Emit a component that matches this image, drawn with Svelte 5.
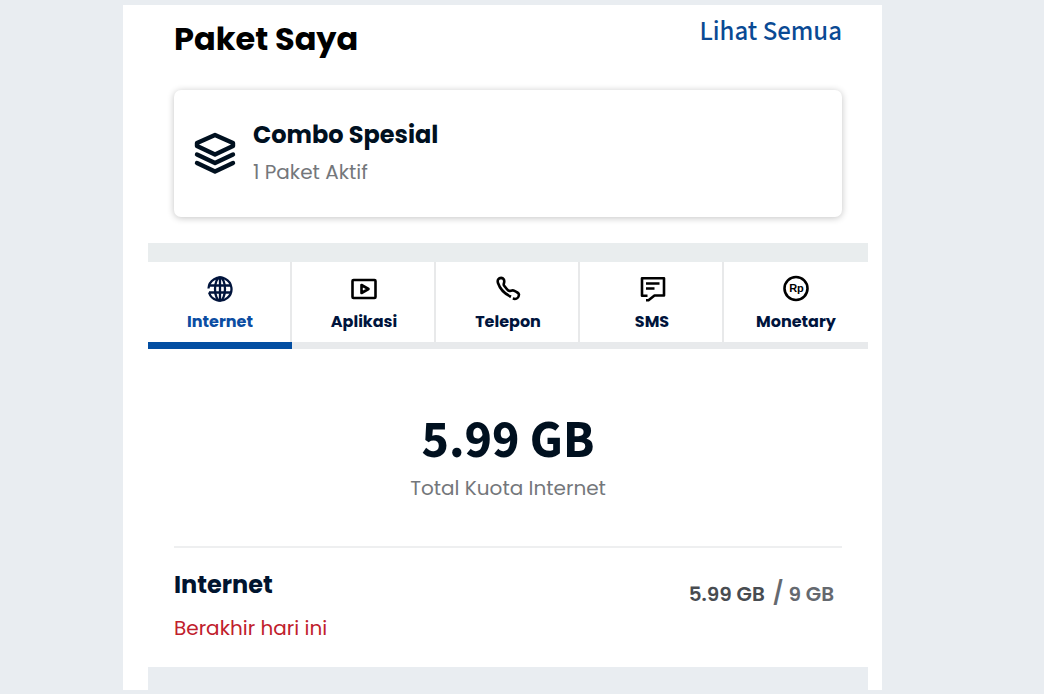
<script lang="ts">
  type Tab = {
    id: string
    label: string
  }

  const tabs: Tab[] = [
    { id: 'internet', label: 'Internet' },
    { id: 'aplikasi', label: 'Aplikasi' },
    { id: 'telepon', label: 'Telepon' },
    { id: 'sms', label: 'SMS' },
    { id: 'monetary', label: 'Monetary' },
  ]

  let active = $state('internet')
</script>

<main class="panel">
  <header class="header">
    <h1>Paket Saya</h1>
    <a href="#semua">Lihat Semua</a>
  </header>

  <section class="card">
    <svg class="layers" viewBox="0 0 42 42" aria-hidden="true">
      <path d="M21 3 39 11v3L21 22.500 3 14v-3z" />
      <path d="M3 22.500 21 31l18-8.500" />
      <path d="M3 31 21 39.500l18-8.500" />
    </svg>
    <div>
      <h2>Combo Spesial</h2>
      <p>1 Paket Aktif</p>
    </div>
  </section>

  <div class="package">
    <nav class="tabs">
      {#each tabs as tab}
        <button
          type="button"
          class="tab"
          class:active={active === tab.id}
          aria-pressed={active === tab.id}
          onclick={() => (active = tab.id)}
        >
          <svg class="icon" viewBox="0 0 28 28" aria-hidden="true">
            {#if tab.id === 'internet'}
              <g class="globe">
                <path d="M2.500 13.500A11.500 11.500 0 1 1 3 17.500" />
                <ellipse cx="14" cy="14" rx="5" ry="11.500" />
                <path d="M14 2.500v23M3 10.500h22M3 17.500h22" />
              </g>
            {:else if tab.id === 'aplikasi'}
              <rect x="2.500" y="5" width="23" height="18" rx="1" />
              <path d="M11.500 10v8l7-4z" />
            {:else if tab.id === 'telepon'}
              <path d="M17 21.800C10 18.500 5.500 12.500 4 8C3 5 4.800 3 7.200 2.900C9.500 2.900 10.500 5 10.200 7C10 8.500 9.200 9.500 10 10.500C11.500 12.500 13 14.500 14.500 15.700C16 16.500 17.500 15 19.500 15.500C22 16.500 24.500 17.500 25 19.500C24.800 22 23 24 21 24L18.800 23.500" />
            {:else if tab.id === 'sms'}
              <path d="M9.500 20.800H4V3.200h22V20.500H16.500l-6 4.700H8" />
              <path d="M8 8.500h13.500M8 13.500h8.500" />
            {:else}
              <circle cx="14" cy="13.500" r="11.500" />
              <text x="14.500" y="16.500" text-anchor="middle">Rp</text>
            {/if}
          </svg>
          <span>{tab.label}</span>
        </button>
      {/each}
    </nav>

    <section class="total">
      <strong>5.99 GB</strong>
      <p>Total Kuota Internet</p>
    </section>

    <section class="quota">
      <div>
        <h3>Internet</h3>
        <p>Berakhir hari ini</p>
      </div>
      <div class="usage">
        <span class="left">5.99 GB</span>
        <span class="limit"><span class="slash">/</span> 9 GB</span>
      </div>
    </section>
  </div>
</main>

<style>
  :global(body) {
    background: #e9edf1;
  }

  .panel {
    margin: 5px 162px 4px 123px;
    background: #fff;
    font-family: Poppins, Inter, sans-serif;
    color: #00142f;
    overflow: hidden;
  }

  h1,
  h2,
  h3,
  p {
    margin: 0;
    font-weight: 400;
  }

  .header {
    display: flex;
    justify-content: space-between;
    align-items: flex-start;
    margin: 10px 40px 0 51px;
  }

  h1 {
    font-size: 32px;
    line-height: 48px;
    font-weight: 700;
    color: #000;
  }

  .header a {
    font-family: 'Source Sans 3', 'Noto Sans CJK SC', sans-serif;
    font-size: 27px;
    line-height: 34px;
    font-weight: 500;
    color: #0a4a94;
    text-decoration: none;
  }

  .card {
    display: flex;
    align-items: flex-start;
    gap: 17px;
    margin: 27px 40px 0 51px;
    padding: 26px 20px 27px;
    border-radius: 7px;
    box-shadow: 0 1px 7px rgba(0, 0, 0, 0.24);
  }

  .layers {
    width: 42px;
    height: 42px;
    margin-top: 16px;
    fill: none;
    stroke: #00101f;
    stroke-width: 4.400;
    stroke-linecap: round;
    stroke-linejoin: round;
  }

  h2 {
    font-size: 24px;
    line-height: 38px;
    font-weight: 700;
    color: #00101f;
  }

  .card p {
    font-size: 20px;
    line-height: 36px;
    color: #74777b;
  }

  .package {
    margin: 26px 14px 0 25px;
    border-top: 19px solid #e9edee;
    border-bottom: 23px solid #e9edf1;
  }

  .tabs {
    display: flex;
  }

  .tab {
    flex: 1;
    display: flex;
    flex-direction: column;
    align-items: center;
    gap: 6px;
    padding: 13px 0 7px;
    border: 0;
    border-bottom: 7px solid #e8eaec;
    background: none;
    font: inherit;
    font-size: 16px;
    line-height: 26px;
    font-weight: 700;
    color: #00143c;
    cursor: pointer;
  }

  .tab:not(:last-child) {
    box-shadow: inset -2px 0 #e8e9ea;
  }

  .tab.active {
    border-bottom-color: #034ea2;
  }

  .tab.active span {
    color: #0b4da2;
  }

  .icon {
    width: 28px;
    height: 28px;
    fill: none;
    stroke: #000;
    stroke-width: 2.600;
    stroke-linejoin: round;
  }

  .globe {
    stroke: #00143c;
    stroke-width: 2.300;
  }

  .icon text {
    font-family: 'Liberation Sans', sans-serif;
    font-size: 11px;
    font-weight: 700;
    fill: #000;
    stroke: none;
  }

  .total {
    padding: 60px 26px 42px;
    text-align: center;
  }

  .total strong {
    display: block;
    font-family: 'Source Sans 3', 'Noto Sans CJK SC', sans-serif;
    font-size: 52px;
    line-height: 64px;
    font-weight: 700;
    color: #00101f;
  }

  .total p {
    font-size: 20px;
    line-height: 31px;
    color: #74777b;
  }

  .quota {
    display: flex;
    justify-content: space-between;
    align-items: flex-start;
    margin: 0 26px;
    padding: 16px 8px 17px 0;
    border-top: 2px solid #eeeff0;
  }

  h3 {
    font-size: 24px;
    line-height: 42px;
    font-weight: 700;
  }

  .quota p {
    font-size: 20px;
    line-height: 44px;
    color: #c0202c;
  }

  .usage {
    display: flex;
    align-items: center;
    gap: 8px;
    padding-top: 14px;
    font-size: 20px;
    line-height: 32px;
    font-weight: 600;
    color: #65696f;
  }

  .usage .left {
    color: #484c51;
  }

  .limit {
    display: flex;
    align-items: center;
    gap: 5px;
  }

  .slash {
    font-size: 22px;
  }
</style>
